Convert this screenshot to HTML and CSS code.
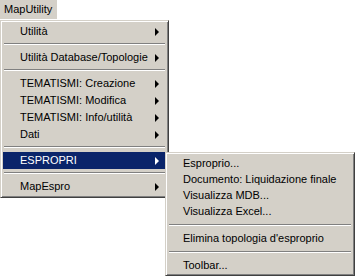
FILE: index.html
```html
<!DOCTYPE html>
<html lang="it">
<head>
    <meta charset="UTF-8">
    <title>MapUtility</title>
    <link rel="stylesheet" href="styles.css">
</head>
<body>
    <div class="menubar">
        <div class="menubar-item">MapUtility</div>
    </div>
    <div class="menu main-menu">
        <div class="item sub">Utilità</div>
        <div class="sep"></div>
        <div class="item sub">Utilità Database/Topologie</div>
        <div class="sep"></div>
        <div class="item sub">TEMATISMI: Creazione</div>
        <div class="item sub">TEMATISMI: Modifica</div>
        <div class="item sub">TEMATISMI: Info/utilità</div>
        <div class="item sub">Dati</div>
        <div class="sep"></div>
        <div class="item sub active">ESPROPRI
            <div class="menu sub-menu">
                <div class="item">Esproprio...</div>
                <div class="item">Documento: Liquidazione finale</div>
                <div class="item">Visualizza MDB...</div>
                <div class="item">Visualizza Excel...</div>
                <div class="sep"></div>
                <div class="item">Elimina topologia d'esproprio</div>
                <div class="sep"></div>
                <div class="item">Toolbar...</div>
            </div>
        </div>
        <div class="sep"></div>
        <div class="item sub">MapEspro</div>
    </div>
</body>
</html>
```

FILE: styles.css
```css
html, body {
    height: 100%;
}
body {
    margin: 0;
    min-height: 277px;
    background: #fff;
    font-family: Tahoma, "Liberation Sans", Arial, sans-serif;
    font-size: 11px;
    color: #000;
}
.menubar {
    display: flex;
    height: 19px;
}
.menubar-item {
    background: #d4d0c8;
    padding: 0 5px 0 4px;
    line-height: 19px;
    width: 48px;
}
.menu {
    background: #d4d0c8;
    border: 1px solid;
    border-color: #d4d0c8 #404040 #404040 #d4d0c8;
    box-shadow: inset 1px 1px #fff, inset -1px -1px #808080;
    padding: 2px;
}
.main-menu {
    width: 163px;
    margin-top: 1px;
}
.item {
    position: relative;
    height: 17px;
    line-height: 17px;
    padding-left: 17px;
    white-space: nowrap;
}
.sub::after {
    content: "";
    position: absolute;
    right: 7px;
    top: 5px;
    border-left: 4px solid #000;
    border-top: 4px solid transparent;
    border-bottom: 4px solid transparent;
}
.active {
    background: #0a246a;
    color: #fff;
    z-index: 1;
}
.active::after {
    border-left-color: #fff;
}
.sep {
    height: 2px;
    margin: 3px 1px 4px;
    border-top: 1px solid #808080;
    border-bottom: 1px solid #fff;
    box-sizing: border-box;
}
.sub-menu {
    position: absolute;
    left: 162px;
    top: 0;
    width: 184px;
    color: #000;
}
.sub-menu .item {
    height: 16px;
    line-height: 16px;
    padding-left: 15px;
}
.sub-menu .sep {
    margin: 5px 1px 4px;
}
```
